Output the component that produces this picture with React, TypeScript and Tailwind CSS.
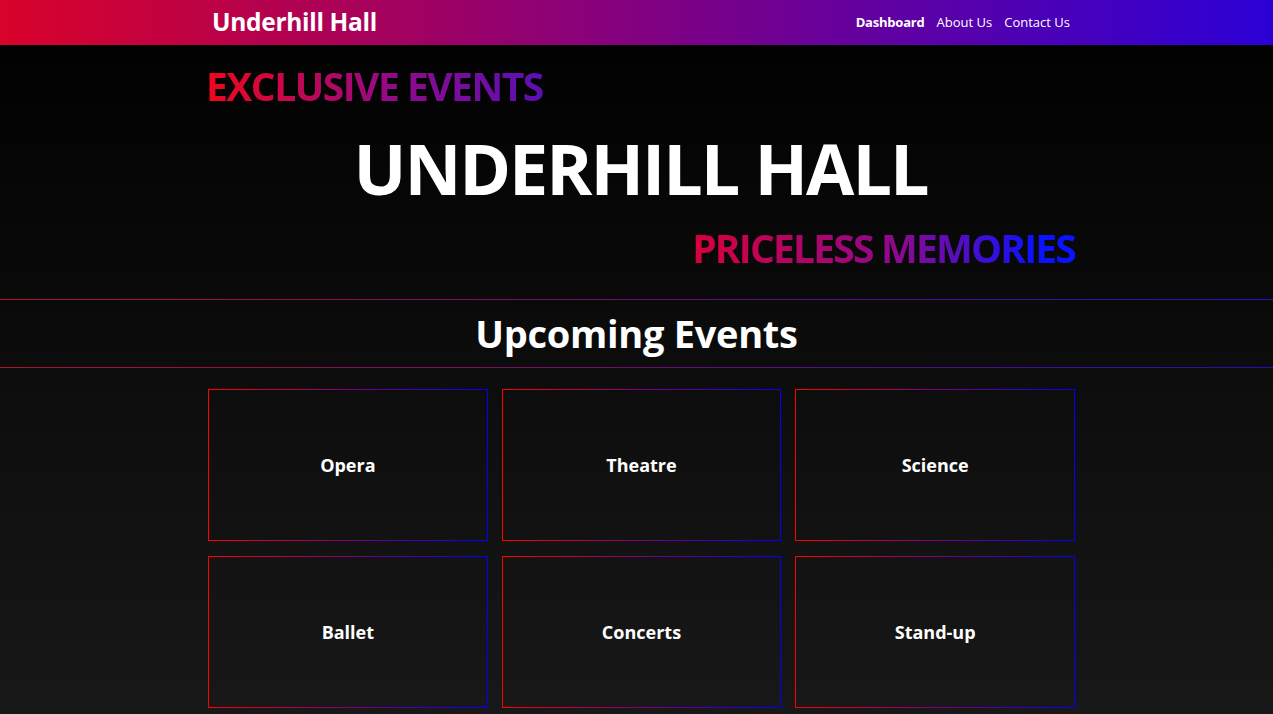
import React from "react";

const events = ["Opera", "Theatre", "Science", "Ballet", "Concerts", "Stand-up"];

export default function App() {
  return (
    <div className="min-h-screen bg-[linear-gradient(to_bottom,#000000,#191919)] font-['Open_Sans',sans-serif] text-white">
      <nav className="h-[45px] bg-[linear-gradient(to_right,#d9022a,#2c00d6)]">
        <div className="ml-[212px] mr-[203px] flex h-full items-center justify-between">
          <span className="text-[24.5px] font-bold tracking-[-0.3px]">Underhill Hall</span>
          <div className="flex items-center gap-3 text-[13px]">
            <a className="font-bold tracking-[-0.2px]">Dashboard</a>
            <a>About Us</a>
            <a>Contact Us</a>
          </div>
        </div>
      </nav>

      <header className="ml-[206px] w-[869px] pt-[11px] pb-[21px]">
        <h3 className="w-fit bg-[linear-gradient(to_right,#f0061a,#920a88_55%,#5a10b4)] bg-clip-text text-[39px] font-bold leading-[60px] tracking-[-1.5px] text-transparent">
          EXCLUSIVE EVENTS
        </h3>
        <h1 className="mt-[2px] text-center text-[70px] font-bold leading-[100px] tracking-[-2px]">UNDERHILL HALL</h1>
        <h3 className="ml-auto w-fit bg-[linear-gradient(to_right,#d8003a,#8a0a90_55%,#0a12ff_90%)] bg-clip-text text-[39px] font-bold leading-[60px] tracking-[-1.8px] text-transparent">
          PRICELESS MEMORIES
        </h3>
      </header>

      <div className="h-px bg-[linear-gradient(to_right,#b0102c,#2410b8)]" />
      <h2 className="py-[8px] text-center text-[38px] font-bold leading-[51px] tracking-[-0.3px]">Upcoming Events</h2>
      <div className="h-px bg-[linear-gradient(to_right,#b0102c,#2410b8)]" />

      <main className="ml-[208px] grid w-[867px] grid-cols-3 gap-x-[14px] gap-y-[15px] pt-[21px] pb-10">
        {events.map((name) => (
          <div
            key={name}
            className="flex h-[152px] items-center justify-center border [border-image:linear-gradient(to_right,#ff0000,#0000ff)_1]"
          >
            <span className="text-[18px] font-bold">{name}</span>
          </div>
        ))}
      </main>
    </div>
  );
}
